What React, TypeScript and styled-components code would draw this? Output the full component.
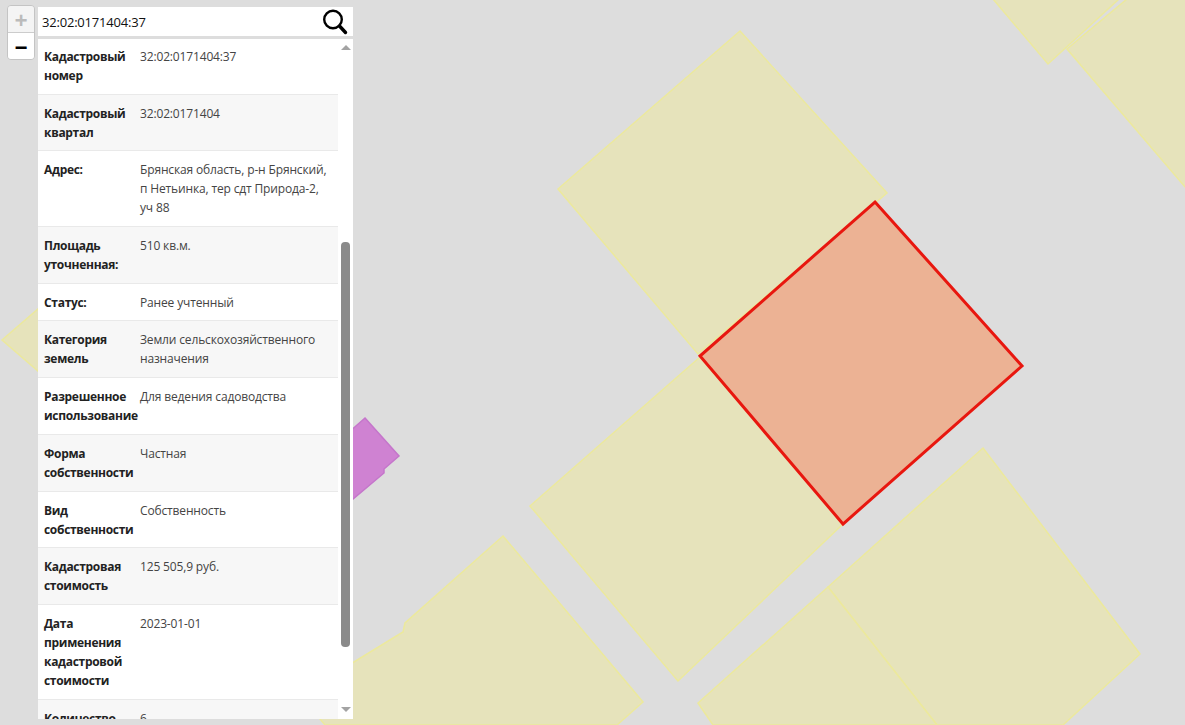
import React from 'react';
import styled, { createGlobalStyle } from 'styled-components';

const GlobalStyle = createGlobalStyle`
  html, body {
    margin: 0;
    padding: 0;
    height: 100%;
    overflow: hidden;
    background: #dddddd;
  }
  #root {
    height: 100%;
  }
`;

const MapView = styled.div`
  position: relative;
  width: 100%;
  height: 100%;
  overflow: hidden;
  background: #dddddd;
  font-family: 'Open Sans', 'Noto Sans', sans-serif;
  color: #212529;
`;

const MapCanvas = styled.svg`
  position: absolute;
  inset: 0;
  display: block;
`;

const ZoomControl = styled.div`
  position: absolute;
  top: 5px;
  left: 7px;
  width: 26px;
  display: flex;
  flex-direction: column;
  border: 1px solid #c4c4c4;
  border-radius: 4px;
  overflow: hidden;
`;

const ZoomButton = styled.div<{ $disabled?: boolean }>`
  box-sizing: border-box;
  height: ${({ $disabled }) => ($disabled ? '27px' : '26px')};
  padding-top: 7px;
  display: flex;
  align-items: center;
  justify-content: center;
  font-family: 'Liberation Mono', monospace;
  font-weight: 700;
  font-size: 22px;
  line-height: 20px;
  color: ${({ $disabled }) => ($disabled ? '#bbbbbb' : '#000000')};
  background: ${({ $disabled }) => ($disabled ? '#f4f4f4' : '#ffffff')};
  border-bottom: ${({ $disabled }) => ($disabled ? '1px solid #cccccc' : 'none')};
`;

const SearchPanel = styled.div`
  position: absolute;
  top: 7px;
  left: 38px;
  bottom: 6px;
  width: 315px;
  display: flex;
  flex-direction: column;
  gap: 3px;
`;

const SearchBar = styled.div`
  height: 29px;
  flex: none;
  display: flex;
  align-items: center;
  justify-content: space-between;
  padding: 0 5px 0 4px;
  background: #ffffff;
`;

const SearchInput = styled.div`
  font-size: 13px;
  letter-spacing: -0.2px;
  color: #111111;
`;

const ResultBox = styled.div`
  flex: 1;
  min-height: 0;
  display: flex;
  background: #ffffff;
  overflow: hidden;
`;

const Rows = styled.div`
  width: 300px;
  flex: none;
  margin-top: -1px;
`;

const Row = styled.div<{ $striped: boolean }>`
  display: grid;
  grid-template-columns: 96px 1fr;
  padding: 9px 6px 8.7px;
  font-size: 12px;
  line-height: 19px;
  background: ${({ $striped }) => ($striped ? '#f7f7f7' : '#ffffff')};
  border-bottom: 1px solid #e9e9e9;
`;

const Label = styled.div`
  font-weight: 700;
  width: 92px;
  letter-spacing: -0.3px;
  color: #222222;
`;

const Value = styled.div`
  color: #444444;
  letter-spacing: -0.15px;
`;

const Scrollbar = styled.div`
  width: 15px;
  flex: none;
  display: flex;
  flex-direction: column;
  align-items: center;
`;

const ArrowUp = styled.div`
  margin-top: 6px;
  width: 0;
  height: 0;
  border-left: 5px solid transparent;
  border-right: 5px solid transparent;
  border-bottom: 5px solid #a3a3a3;
`;

const ArrowDown = styled.div`
  margin-top: auto;
  margin-bottom: 7px;
  width: 0;
  height: 0;
  border-left: 5px solid transparent;
  border-right: 5px solid transparent;
  border-top: 5px solid #a3a3a3;
`;

const Thumb = styled.div`
  margin-top: 192px;
  width: 9px;
  height: 405px;
  border-radius: 4px;
  background: #8a8a8a;
`;

const parcels = [
  '740,31 887,193 698,354 558,189',
  '700,357 843,524 678,681 530,506',
  '983,448 1140,654 1063,725 937,725 828,587',
  '828,587 937,725 713,725 698,703',
  '503,536 643,702 617,725 325,725 300,695 403,632 405,623',
  '993,-1 1048,64 1119,-1',
  '1067,49 1127,-1 1186,-1 1186,188',
  '2,340 60,290 60,390',
];

const rows = [
  { label: 'Кадастровый номер', value: '32:02:0171404:37' },
  { label: 'Кадастровый квартал', value: '32:02:0171404' },
  { label: 'Адрес:', value: 'Брянская область, р-н Брянский, п Нетьинка, тер сдт Природа-2, уч 88' },
  { label: 'Площадь уточненная:', value: '510 кв.м.' },
  { label: 'Статус:', value: 'Ранее учтенный' },
  { label: 'Категория земель', value: 'Земли сельскохозяйственного назначения' },
  { label: 'Разрешенное использование', value: 'Для ведения садоводства' },
  { label: 'Форма собственности', value: 'Частная' },
  { label: 'Вид собственности', value: 'Собственность' },
  { label: 'Кадастровая стоимость', value: '125 505,9 руб.' },
  { label: 'Дата применения кадастровой стоимости', value: '2023-01-01' },
  { label: 'Количество', value: '6' },
];

const SearchIcon = () => (
  <svg width="26" height="26" viewBox="0 0 26 26" fill="none" stroke="#000" strokeWidth="2.4">
    <circle cx="11" cy="10.5" r="8.8" />
    <path d="M17.5 17 L23.5 23.5" strokeWidth="3.4" strokeLinecap="round" />
  </svg>
);

const App: React.FC = () => {
  return (
    <MapView>
      <GlobalStyle />
      <MapCanvas width="1185" height="725" viewBox="0 0 1185 725">
        {parcels.map((points) => (
          <polygon key={points} points={points} fill="#e6e3bb" stroke="#ece99c" strokeWidth="1.5" />
        ))}
        <polygon
          points="365,418 399,456 384,469 384,473 340,510 340,440"
          fill="#cf82d2"
          stroke="#c576cb"
          strokeWidth="1.5"
        />
        <polygon
          points="875,202 1022,366 843,524 700,356"
          fill="#ecb294"
          stroke="#e8170f"
          strokeWidth="3"
        />
      </MapCanvas>

      <ZoomControl>
        <ZoomButton $disabled>+</ZoomButton>
        <ZoomButton>−</ZoomButton>
      </ZoomControl>

      <SearchPanel>
        <SearchBar>
          <SearchInput>32:02:0171404:37</SearchInput>
          <SearchIcon />
        </SearchBar>
        <ResultBox>
          <Rows>
            {rows.map((row, i) => (
              <Row key={row.label} $striped={i % 2 === 1}>
                <Label>{row.label}</Label>
                <Value>{row.value}</Value>
              </Row>
            ))}
          </Rows>
          <Scrollbar>
            <ArrowUp />
            <Thumb />
            <ArrowDown />
          </Scrollbar>
        </ResultBox>
      </SearchPanel>
    </MapView>
  );
};

export default App;
